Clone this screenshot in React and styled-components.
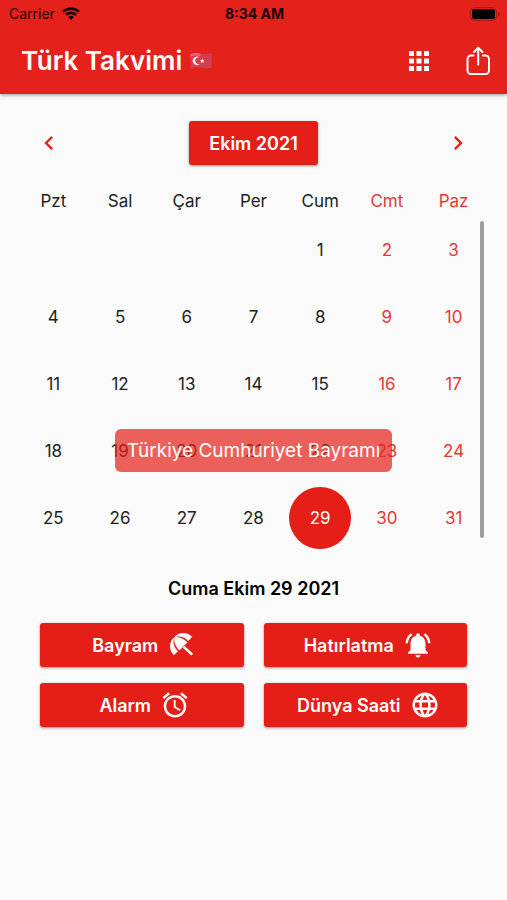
import React, { useState } from "react";
import styled, { createGlobalStyle } from "styled-components";
import {
  MdAlarm,
  MdApps,
  MdChevronLeft,
  MdChevronRight,
  MdLanguage,
  MdNotificationsActive,
} from "react-icons/md";

const weekDays = ["Pzt", "Sal", "Çar", "Per", "Cum", "Cmt", "Paz"];
const longDays = [
  "Pazartesi",
  "Salı",
  "Çarşamba",
  "Perşembe",
  "Cuma",
  "Cumartesi",
  "Pazar",
];

// October 2021 starts on a Friday
const weeks = [
  [null, null, null, null, 1, 2, 3],
  [4, 5, 6, 7, 8, 9, 10],
  [11, 12, 13, 14, 15, 16, 17],
  [18, 19, 20, 21, 22, 23, 24],
  [25, 26, 27, 28, 29, 30, 31],
];

const holidays = { 29: "Türkiye Cumhuriyet Bayramı" };

const WifiIcon = () => (
  <svg width="18" height="14" viewBox="0 0 18 14" fill="#1a0504">
    <path d="M9 0.3C5.6 0.3 2.5 1.6 0.2 3.8L2 5.7C3.9 3.9 6.3 2.9 9 2.9S14.1 3.9 16 5.7L17.8 3.8C15.5 1.6 12.4 0.3 9 0.3Z" />
    <path d="M9 4.6C6.8 4.6 4.7 5.5 3.2 6.9L5 8.8C6.1 7.8 7.5 7.2 9 7.2S11.9 7.8 13 8.8L14.8 6.9C13.3 5.5 11.2 4.6 9 4.6Z" />
    <path d="M9 8.8C7.9 8.8 6.9 9.2 6.1 9.9L9 13L11.9 9.9C11.1 9.2 10.1 8.8 9 8.8Z" />
  </svg>
);

const BatteryIcon = () => (
  <svg width="30" height="14" viewBox="0 0 30 14">
    <rect x="0.5" y="0.5" width="26" height="13" rx="4" fill="none" stroke="#a81813" />
    <rect x="2" y="2" width="23" height="10" rx="2.5" fill="#000" />
    <path d="M28 4.8C29.2 5.3 29.7 6 29.7 7S29.2 8.7 28 9.2Z" fill="#a81813" />
  </svg>
);

const FlagIcon = () => (
  <svg width="24" height="20" viewBox="0 0 24 20" role="img" aria-label="Türkiye">
    <path
      d="M1.5 3.2C5 1.6 8 1.9 11.5 2.7S18.5 3.5 22.5 2V16.2C18.5 17.6 15.5 17.3 12 16.5S5 16.2 1.5 18Z"
      fill="#dc3c4c"
    />
    <path d="M12 2.8C15.5 3.6 18.5 3.5 22.5 2V16.2C18.5 17.6 15.5 17.3 12 16.5Z" fill="#d04050" />
    <path d="M1.5 3.2C5 1.6 8 1.9 11.5 2.7V5C8 4.2 5 4.2 1.5 5.5Z" fill="#e56573" />
    <path
      d="M10.5 6.4A4.2 4.2 0 1 0 10.5 13.2A3.5 3.5 0 1 1 10.5 6.4Z"
      fill="#fff"
    />
    <path d="M13.2 7.6L13.8 9.1L15.4 9.2L14.2 10.3L14.6 11.9L13.2 11L11.8 11.9L12.2 10.3L11 9.2L12.6 9.1Z" fill="#fff" />
  </svg>
);

const ShareIcon = () => (
  <svg
    width="24"
    height="30"
    viewBox="0 0 24 30"
    fill="none"
    stroke="#fff"
    strokeWidth="2"
    strokeLinecap="round"
    strokeLinejoin="round"
  >
    <path d="M7.5 9.5H5A3.5 3.5 0 0 0 1.5 13V24.5A3.5 3.5 0 0 0 5 28H19.500A3.5 3.5 0 0 0 23 24.5V13A3.5 3.5 0 0 0 19.500 9.5H17" />
    <path d="M12.2 18.5V2" />
    <path d="M8 6L12.2 1.8L16.4 6" />
  </svg>
);

const UmbrellaIcon = ({ size }) => (
  <svg width={size} height={size} viewBox="0 0 24 24" fill="currentColor">
    <path d="M12.7 14.1L14.1 12.7L20.9 18.9L19.5 20.4Z" />
    <g stroke="currentColor" strokeWidth="0.7" strokeLinejoin="round">
      <path d="M17 8.4L19.7 5.4C15.900 2 10.200 1.900 6.600 5.200C10.300 4.200 14.100 5.400 17 8.400Z" />
      <path d="M5.200 6.600C1.900 10.200 2 15.900 5.400 19.700L8.400 17C5.400 14.100 4.200 10.300 5.200 6.600Z" />
      <path d="M6 6C5.700 9.200 7.100 13 9.900 16L16 9.900C13 7.100 9.200 5.700 6 6Z" />
    </g>
  </svg>
);

const actions = [
  { label: "Bayram", Icon: UmbrellaIcon },
  { label: "Hatırlatma", Icon: MdNotificationsActive },
  { label: "Alarm", Icon: MdAlarm },
  { label: "Dünya Saati", Icon: MdLanguage },
];

const App = () => {
  const [selected, setSelected] = useState(29);

  const column = weeks.find((week) => week.includes(selected)).indexOf(selected);

  return (
    <>
      <GlobalStyle />
      <Header>
        <StatusBar>
          <Carrier>
            Carrier
            <WifiIcon />
          </Carrier>
          <Clock>8:34 AM</Clock>
          <Battery>
            <BatteryIcon />
          </Battery>
        </StatusBar>
        <AppBar>
          <Title>
            Türk Takvimi
            <FlagIcon />
          </Title>
          <IconButton type="button" aria-label="Uygulamalar">
            <MdApps size={30} />
          </IconButton>
          <IconButton type="button" aria-label="Paylaş">
            <ShareIcon />
          </IconButton>
        </AppBar>
      </Header>

      <Main>
        <MonthBar>
          <ArrowButton type="button" aria-label="Önceki ay">
            <MdChevronLeft size={28} />
          </ArrowButton>
          <MonthButton type="button">Ekim 2021</MonthButton>
          <ArrowButton type="button" aria-label="Sonraki ay">
            <MdChevronRight size={28} />
          </ArrowButton>
        </MonthBar>

        <CalendarArea>
          <Calendar>
            <thead>
              <tr>
                {weekDays.map((day, i) => (
                  <WeekDay key={day} scope="col" $weekend={i > 4}>
                    {day}
                  </WeekDay>
                ))}
              </tr>
            </thead>
            <tbody>
              {weeks.map((week, row) => (
                <tr key={row}>
                  {week.map((day, i) => (
                    <DayCell key={i}>
                      {day && (
                        <DayButton
                          type="button"
                          $weekend={i > 4}
                          $selected={day === selected}
                          onClick={() => setSelected(day)}
                        >
                          {day}
                        </DayButton>
                      )}
                    </DayCell>
                  ))}
                </tr>
              ))}
            </tbody>
          </Calendar>
          <ScrollThumb />
          {holidays[selected] && (
            <ToastRow>
              <Toast role="status">{holidays[selected]}</Toast>
            </ToastRow>
          )}
        </CalendarArea>

        <SelectedDate>
          {longDays[column]} Ekim {selected} 2021
        </SelectedDate>

        <Actions>
          {actions.map(({ label, Icon }) => (
            <ActionButton key={label} type="button">
              {label}
              <Icon size={30} />
            </ActionButton>
          ))}
        </Actions>
      </Main>
    </>
  );
};

export default App;

const GlobalStyle = createGlobalStyle`
  * {
    box-sizing: border-box;
  }

  body {
    margin: 0;
    background: #fafafa;
    color: #212121;
    font-family: Inter, "Liberation Sans", sans-serif;
  }

  button {
    margin: 0;
    padding: 0;
    border: none;
    background: none;
    font-family: inherit;
    cursor: pointer;
  }

  svg {
    display: block;
    flex-shrink: 0;
  }
`;

const Header = styled.header`
  background: #e5211b;
  box-shadow: 0 1px 4px rgba(0, 0, 0, 0.4);
`;

const StatusBar = styled.div`
  display: grid;
  grid-template-columns: 1fr auto 1fr;
  align-items: center;
  height: 27px;
  padding: 0 7px 0 9px;
  color: #1a0504;
  font-size: 14px;
`;

const Carrier = styled.span`
  display: flex;
  align-items: center;
  gap: 7px;
`;

const Clock = styled.span`
  font-weight: 700;
`;

const Battery = styled.span`
  display: flex;
  justify-content: flex-end;
`;

const AppBar = styled.div`
  display: flex;
  align-items: center;
  gap: 32px;
  height: 67px;
  padding: 0 17px 0 21px;
`;

const Title = styled.h1`
  display: flex;
  flex: 1;
  align-items: center;
  gap: 7px;
  margin: 0;
  color: #fff;
  font-size: 26px;
  font-weight: 600;
`;

const IconButton = styled.button`
  color: #fff;
`;

const Main = styled.main`
  padding: 27px 20px;
`;

const MonthBar = styled.div`
  display: flex;
  align-items: center;
  justify-content: space-between;
  padding: 0 15px;
`;

const ArrowButton = styled.button`
  color: #e5211b;
`;

const RedButton = styled.button`
  display: flex;
  align-items: center;
  justify-content: center;
  height: 44px;
  border-radius: 3px;
  background: #e51e17;
  box-shadow: 0 1px 3px rgba(0, 0, 0, 0.4);
  color: #fff;
  font-size: 18px;
  font-weight: 600;
`;

const MonthButton = styled(RedButton)`
  padding: 0 20px;
`;

const CalendarArea = styled.section`
  position: relative;
  margin-top: 20px;
`;

const Calendar = styled.table`
  width: 100%;
  table-layout: fixed;
  border-collapse: collapse;
`;

const WeekDay = styled.th`
  height: 31px;
  padding: 0;
  color: ${({ $weekend }) => ($weekend ? "#e53935" : "#212121")};
  font-size: 17px;
  font-weight: 400;
`;

const DayCell = styled.td`
  height: 67px;
  padding: 0;
`;

const DayButton = styled.button`
  display: block;
  width: 62px;
  height: 62px;
  margin: 0 auto;
  border-radius: 50%;
  background: ${({ $selected }) => ($selected ? "#e51e17" : "transparent")};
  color: ${({ $selected, $weekend }) =>
    $selected ? "#fff" : $weekend ? "#e53935" : "#212121"};
  font-size: 17px;
`;

// scroll indicator on the right edge of the month
const ScrollThumb = styled.div`
  position: absolute;
  top: 36px;
  right: 3px;
  bottom: 13px;
  width: 4px;
  border-radius: 2px;
  background: #9e9e9e;
`;

const ToastRow = styled.div`
  position: absolute;
  right: 0;
  bottom: 79px;
  left: 0;
  display: flex;
  justify-content: center;
  pointer-events: none;
`;

const Toast = styled.div`
  padding: 9px 12px;
  border-radius: 6px;
  background: rgba(229, 30, 23, 0.7);
  color: #fff;
  font-size: 19px;
  line-height: 25px;
`;

const SelectedDate = styled.h2`
  margin: 26px 0 22px;
  color: #000;
  font-size: 18px;
  font-weight: 600;
  line-height: 24px;
  text-align: center;
`;

const Actions = styled.div`
  display: grid;
  grid-template-columns: 1fr 1fr;
  gap: 16px 20px;
  padding: 0 20px;
`;

const ActionButton = styled(RedButton)`
  gap: 9px;
  padding-left: 6px;
`;
